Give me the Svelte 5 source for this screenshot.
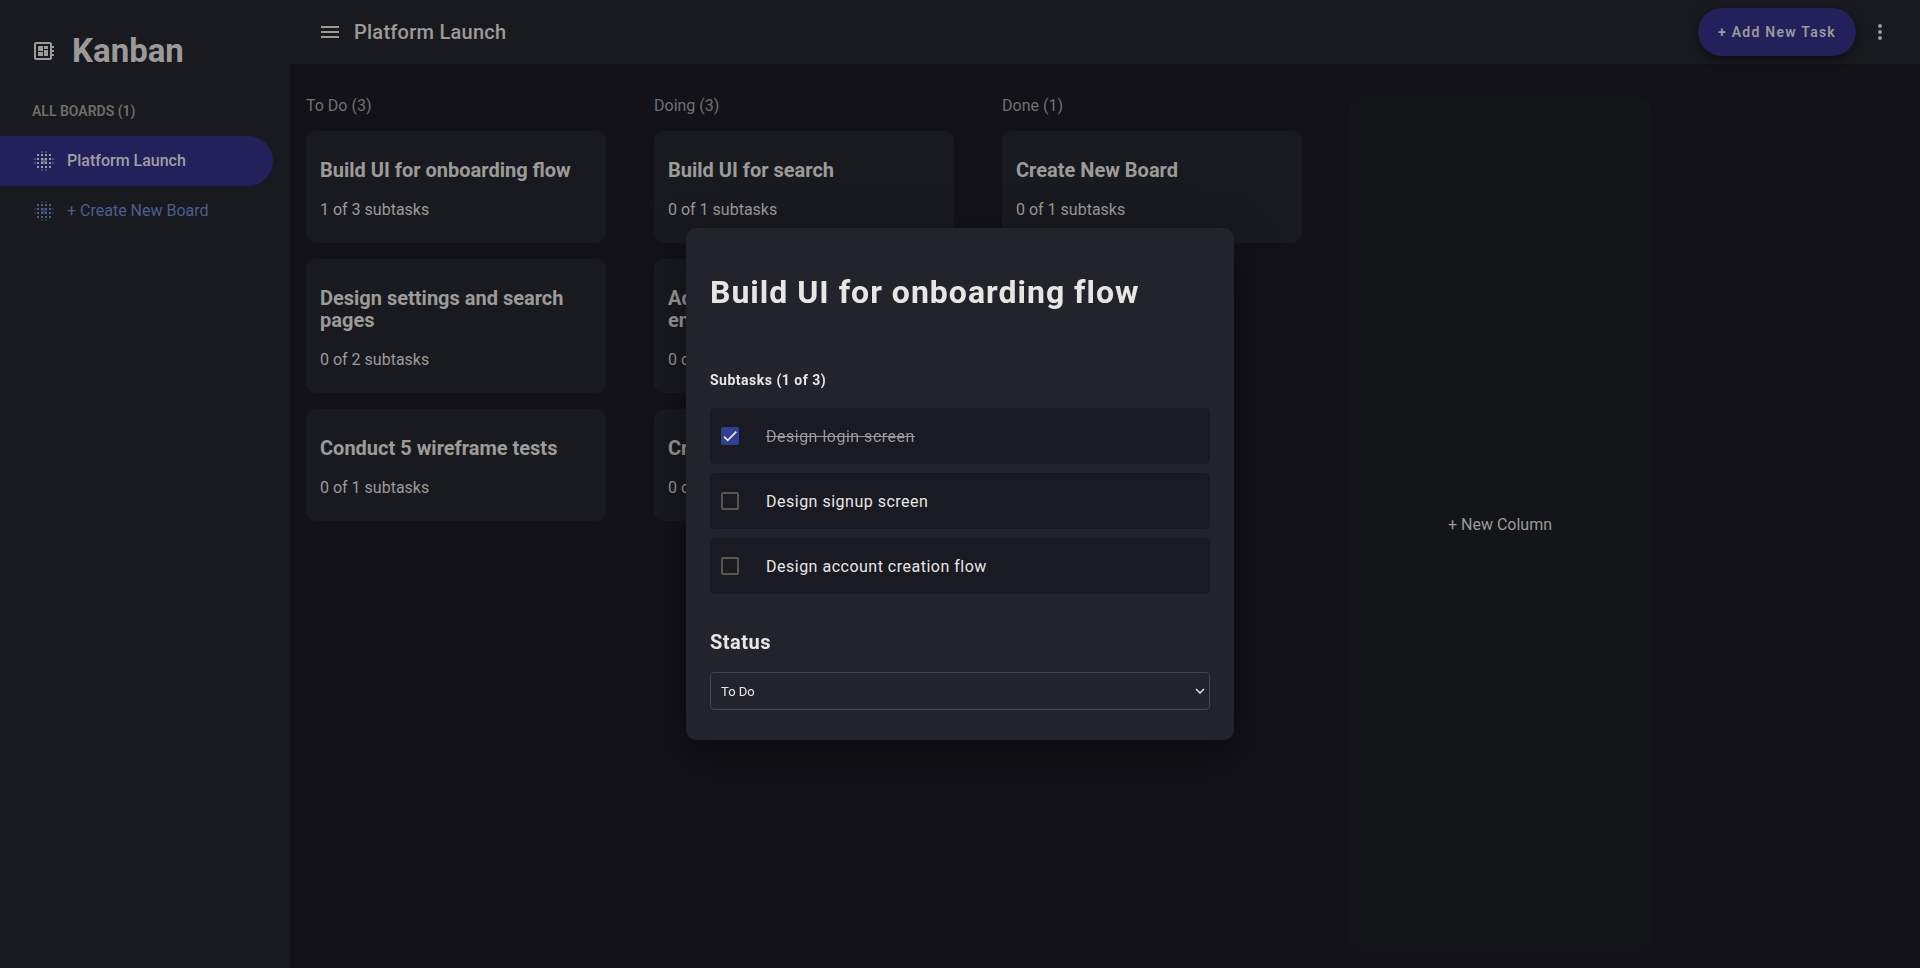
<script>
  const columns = [
    {
      name: 'To Do',
      tasks: [
        { title: 'Build UI for onboarding flow', done: 1, total: 3 },
        { title: 'Design settings and search pages', done: 0, total: 2 },
        { title: 'Conduct 5 wireframe tests', done: 0, total: 1 }
      ]
    },
    {
      name: 'Doing',
      tasks: [
        { title: 'Build UI for search', done: 0, total: 1 },
        { title: 'Add account management endpoints', done: 0, total: 1 },
        { title: 'Create onboarding', done: 0, total: 1 }
      ]
    },
    { name: 'Done', tasks: [{ title: 'Create New Board', done: 0, total: 1 }] }
  ];

  let subtasks = $state([
    { title: 'Design login screen', done: true },
    { title: 'Design signup screen', done: false },
    { title: 'Design account creation flow', done: false }
  ]);
  let doneCount = $derived(subtasks.filter((s) => s.done).length);
  let status = $state('To Do');
</script>

{#snippet blurIcon()}
  <svg class="icon" viewBox="0 0 20 20" aria-hidden="true" shape-rendering="crispEdges">
    <g fill="currentColor">
      {#each [3, 7, 11, 15] as y}
        {#each [3, 7, 11, 15] as x}
          <rect {x} {y} width="2" height="2" />
        {/each}
      {/each}
      <path opacity=".35" d="M7 0h2v2H7zM11 0h2v2h-2zM7 18h2v2H7zM11 18h2v2h-2zM0 7h2v2H0zM0 11h2v2H0zM18 7h2v2h-2zM18 11h2v2h-2z" />
      <path opacity=".45" d="M7 7h6v6H7z" />
    </g>
  </svg>
{/snippet}

<div class="app">
  <aside>
    <div class="brand">
      <svg class="logo" viewBox="0 0 24 24" fill="currentColor" aria-hidden="true">
        <path d="M22 9V7h-2V5c0-1.1-.9-2-2-2H4c-1.100 0-2 .9-2 2v14c0 1.100.9 2 2 2h14c1.100 0 2-.9 2-2v-2h2v-2h-2v-2h2v-2h-2V9h2zm-4 10H4V5h14v14zM6 13h5v4H6zm6-6h4v3h-4zM6 7h5v5H6zm6 4h4v6h-4z" />
      </svg>
      <h1>Kanban</h1>
    </div>
    <p class="boards-label">ALL BOARDS (1)</p>
    <nav>
      <a class="item active" href="#board">{@render blurIcon()}<span>Platform Launch</span></a>
      <a class="item create" href="#new">{@render blurIcon()}<span>+ Create New Board</span></a>
    </nav>
  </aside>

  <div class="main">
    <header>
      <button class="plain" aria-label="Toggle sidebar">
        <svg viewBox="0 0 24 24" fill="currentColor"><path d="M3 18h18v-2H3v2zm0-5h18v-2H3v2zm0-7v2h18V6H3z" /></svg>
      </button>
      <h2>Platform Launch</h2>
      <button class="add">+ Add New Task</button>
      <button class="plain more" aria-label="Board menu">
        <svg viewBox="0 0 24 24" fill="currentColor"><path d="M12 8c1.100 0 2-.9 2-2s-.9-2-2-2-2 .9-2 2 .9 2 2 2zm0 2c-1.100 0-2 .9-2 2s.9 2 2 2 2-.9 2-2-.9-2-2-2zm0 6c-1.100 0-2 .9-2 2s.9 2 2 2 2-.9 2-2-.9-2-2-2z" /></svg>
      </button>
    </header>

    <main>
      {#each columns as col}
        <section>
          <p class="col-name">{col.name} ({col.tasks.length})</p>
          {#each col.tasks as task}
            <article>
              <h3>{task.title}</h3>
              <p>{task.done} of {task.total} subtasks</p>
            </article>
          {/each}
        </section>
      {/each}
      <button class="new-column">+ New Column</button>
    </main>
  </div>
</div>

<div class="overlay">
  <div class="dialog" role="dialog" aria-modal="true" aria-labelledby="task-title">
    <h2 id="task-title">Build UI for onboarding flow</h2>
    <h4>Subtasks ({doneCount} of {subtasks.length})</h4>
    <div class="subtasks">
      {#each subtasks as sub}
        <label class:done={sub.done}>
          <input type="checkbox" bind:checked={sub.done} />
          <span class="box" aria-hidden="true">
            {#if sub.done}
              <svg viewBox="0 0 24 24"><path fill="none" stroke="currentColor" stroke-width="3" d="M1.730 12.910 8.100 19.280 22.790 4.590" /></svg>
            {/if}
          </span>
          <span class="sub-title">{sub.title}</span>
        </label>
      {/each}
    </div>
    <label class="status-label" for="status">Status</label>
    <div class="select">
      <select id="status" bind:value={status}>
        {#each columns as col}<option>{col.name}</option>{/each}
      </select>
      <svg viewBox="0 0 10 10" aria-hidden="true"><path fill="none" stroke="currentColor" stroke-width="1.500" d="M1 3l4 4 4-4" /></svg>
    </div>
  </div>
</div>

<style>
  :global(body) {
    margin: 0;
    background: #131218;
    font-family: Roboto, sans-serif;
    font-size: 16px;
    color: #9c9b98;
  }
  h1, h2, h3, h4, p { margin: 0; }
  button { font-family: inherit; border: 0; cursor: pointer; }
  .app { display: flex; min-height: 100vh; }

  aside { width: 290px; flex: none; background: #191a1f; }
  .brand { display: flex; align-items: center; gap: 16px; padding: 32px 32px 0; }
  .brand h1 { font-size: 33px; line-height: 38px; font-weight: 700; color: #9c9a98; }
  .logo { width: 24px; height: 24px; }
  .boards-label { padding: 32px 32px 16px; font-size: 14px; line-height: 18px; font-weight: 600; color: #706d67; }
  .item {
    display: flex; align-items: center; gap: 13px;
    height: 50px; margin-right: 17px; padding-left: 34px;
    text-decoration: none; border-radius: 0 25px 25px 0;
  }
  .item span { padding-bottom: 2px; }
  .icon { width: 20px; height: 20px; }
  .active { background: #24205c; color: #a09ea3; font-weight: 500; }
  .create { color: #4a5f8e; }

  .main { flex: 1; min-width: 0; display: flex; flex-direction: column; }
  header { display: flex; align-items: center; height: 64px; padding: 0 28px; background: #191a1f; }
  header h2 { flex: 1; margin-left: 12px; font-size: 20px; line-height: 32px; font-weight: 500; letter-spacing: 0.25px; }
  .plain { display: flex; padding: 0; background: none; color: #9c9b98; }
  .plain svg { width: 24px; height: 24px; }
  .more { margin-left: 12px; }
  .add {
    height: 48px; padding: 0 20px; border-radius: 24px;
    background: #24205c; color: #9c9a9b;
    font-size: 14px; font-weight: 600; letter-spacing: 1.25px;
    box-shadow: 0 3px 5px -1px #0003, 0 6px 10px #0002, 0 1px 18px #0002;
  }

  main { flex: 1; display: flex; gap: 48px; padding: 32px 16px 16px; }
  section { width: 300px; flex: none; }
  .col-name { margin-bottom: 16px; line-height: 19px; color: #717073; }
  article { margin-bottom: 16px; padding: 28px 14px 22px; border-radius: 10px; background: #191a1f; }
  article h3 { margin-bottom: 17px; font-size: 20px; line-height: 22px; font-weight: 700; }
  article p { line-height: 23px; }
  .new-column {
    width: 300px; flex: none; border-radius: 10px;
    background: #131518; color: #9c9b98; font-size: 16px;
  }

  .overlay { position: fixed; inset: 0; display: flex; align-items: center; justify-content: center; }
  .dialog {
    box-sizing: border-box; width: 548px; max-width: 100%; padding: 40px 24px 30px;
    border-radius: 10px; background: #23232c; color: #e8e6e3; letter-spacing: 0.5px;
    box-shadow: 0 11px 15px -7px #0003, 0 24px 38px 3px #0002, 0 9px 46px 8px #0003;
  }
  .dialog h2 { margin-bottom: 56px; font-size: 32px; line-height: 48px; font-weight: 700; letter-spacing: 1px; }
  .dialog h4 { margin-bottom: 20px; font-size: 14px; line-height: 16px; font-weight: 700; }
  .subtasks { display: grid; gap: 9px; margin-bottom: 36px; }
  .subtasks label {
    position: relative; display: flex; align-items: center; gap: 27px;
    height: 56px; padding-left: 11px; border-radius: 5px; background: #1a1a23; cursor: pointer;
  }
  input { position: absolute; left: 11px; width: 18px; height: 18px; margin: 0; opacity: 0; }
  .box { box-sizing: border-box; width: 18px; height: 18px; border: 2px solid #59544c; border-radius: 2px; }
  .done .box { border-color: #303f8f; background: #303f8f; color: #e8e6e3; }
  .box svg { display: block; width: 14px; height: 14px; }
  .done .sub-title { color: #9b9998; text-decoration: line-through; }
  .status-label { display: block; margin-bottom: 18px; font-size: 20px; line-height: 24px; font-weight: 700; }
  .select { position: relative; }
  .select svg { position: absolute; right: 5px; top: 14px; width: 10px; height: 10px; pointer-events: none; }
  select {
    display: block; width: 100%; height: 38px; padding: 0 10px; appearance: none;
    border: 1px solid #43464a; border-radius: 4px; background: #23232c;
    color: #e8e6e3; font: 13px Roboto, sans-serif;
  }
</style>
